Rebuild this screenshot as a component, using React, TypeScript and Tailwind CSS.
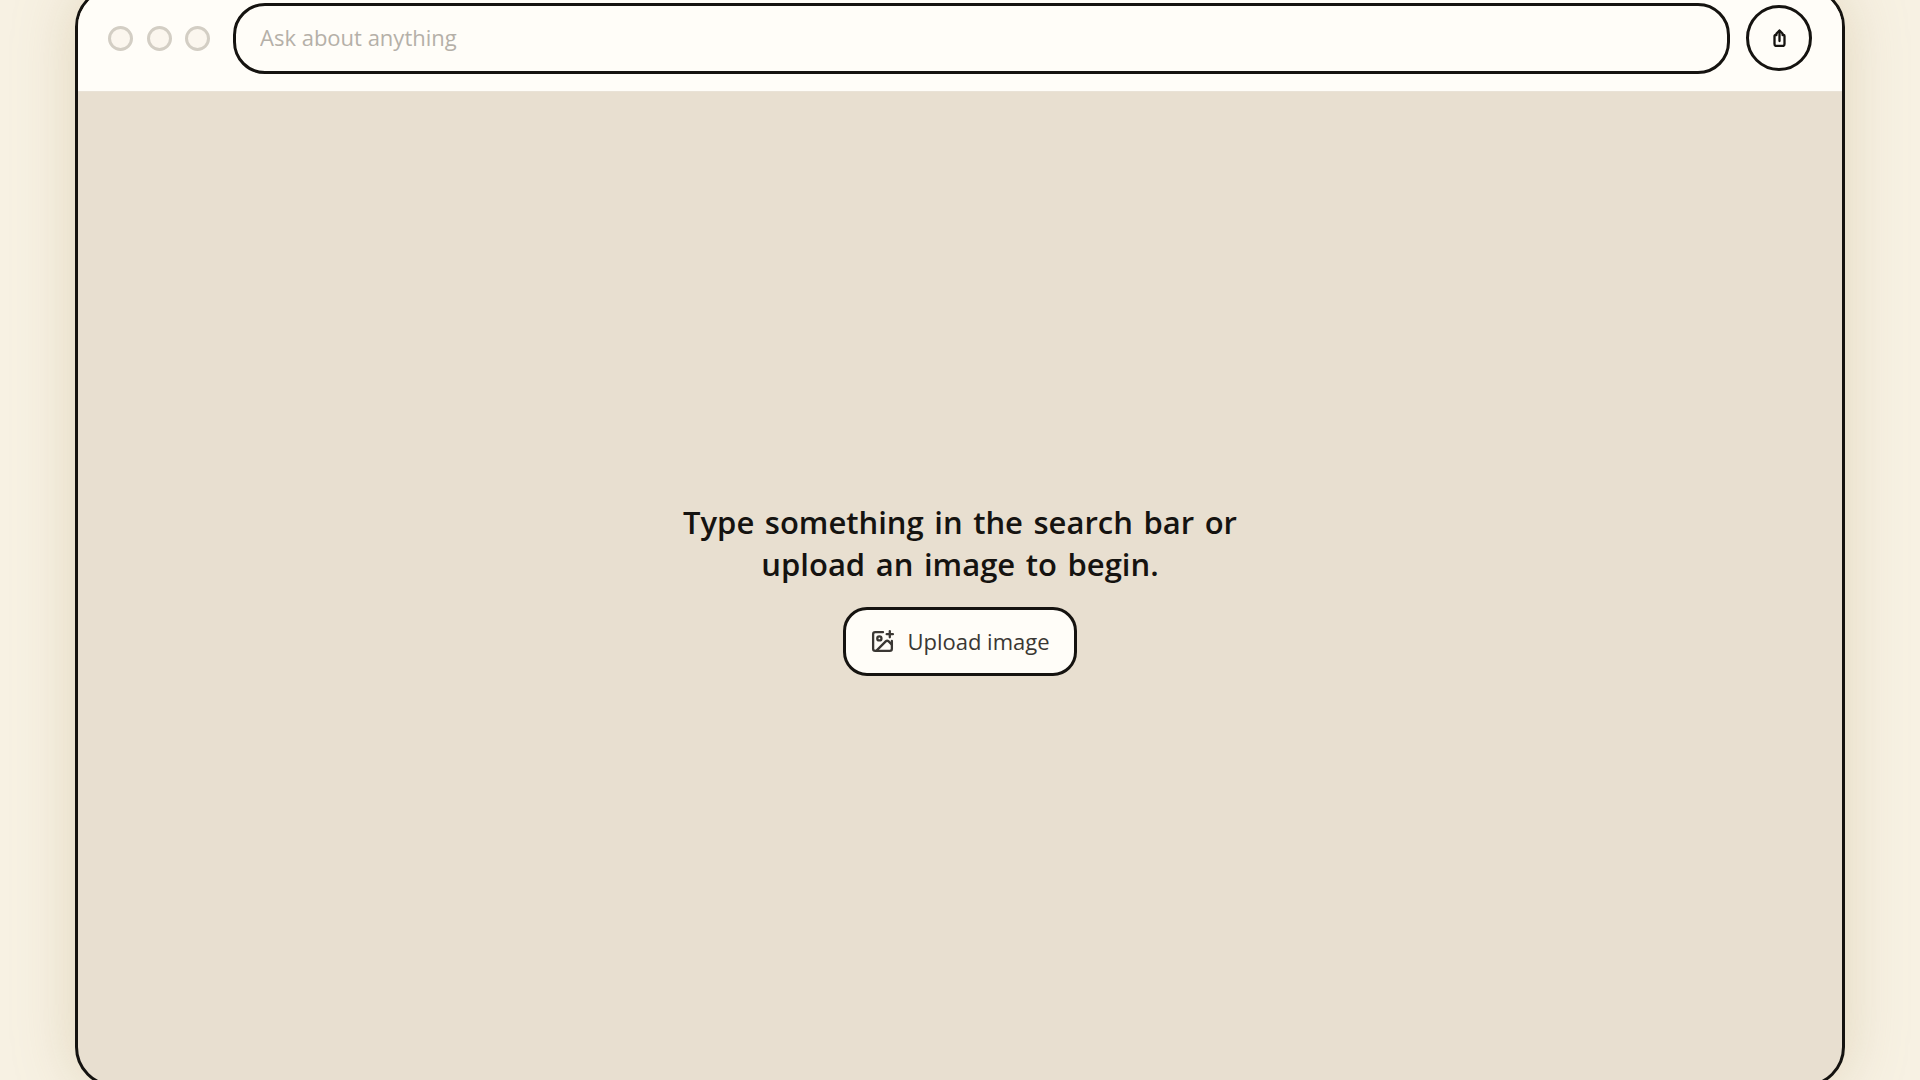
import { ImagePlus } from 'lucide-react';

function ShareIcon() {
  return (
    <svg width="15" height="18" viewBox="0 0 14 18" fill="none" stroke="#151310" strokeWidth="2.3" strokeLinecap="round" strokeLinejoin="round">
      <path d="M4 6H3a1 1 0 0 0-1 1v8a2 2 0 0 0 2 2h6a2 2 0 0 0 2-2V7a1 1 0 0 0-1-1h-1" />
      <path d="M7 12V2" />
      <path d="M4 4.5 7 1.5l3 3" />
    </svg>
  );
}

export default function App() {
  return (
    <div className="h-screen overflow-hidden bg-[#f7f1e3] flex justify-center font-['Open_Sans',sans-serif]">
      <div className="w-[1770px] h-[1100px] -mt-[13px] shrink-0 flex flex-col overflow-hidden rounded-[40px] border-[3px] border-[#151310] bg-[#e8dfd0] shadow-[0_0_60px_rgba(190,170,125,0.38)]">
        <header className="h-[102px] shrink-0 flex items-center gap-[16px] px-[30px] pb-[5px] bg-[#fffdf8] border-b border-[#e9e2d6]">
          <div className="flex items-center gap-[13.5px] pr-[7px]">
            <span className="w-[25px] h-[25px] rounded-full border-[3px] border-[#d3cec4] bg-[#fbf6ee]" />
            <span className="w-[25px] h-[25px] rounded-full border-[3px] border-[#d3cec4] bg-[#fbf6ee]" />
            <span className="w-[25px] h-[25px] rounded-full border-[3px] border-[#d3cec4] bg-[#fbf6ee]" />
          </div>
          <input
            placeholder="Ask about anything"
            className="flex-1 h-[71px] rounded-[32px] border-[3px] border-[#151310] bg-[#fffdf8] px-[24px] pb-[3px] text-[22px] outline-none placeholder:text-[#b5b0a8]"
          />
          <button className="w-[66px] h-[66px] shrink-0 rounded-full border-[3px] border-[#151310] flex items-center justify-center">
            <ShareIcon />
          </button>
        </header>
        <main className="flex-1 flex flex-col items-center justify-center">
          <p className="text-[31px] leading-[42px] font-semibold text-center text-[#151310] [word-spacing:2.5px]">
            Type something in the search bar or
            <br />
            upload an image to begin.
          </p>
          <button className="mt-[22px] h-[69px] flex items-center gap-[12px] px-[24px] rounded-[24px] border-[3px] border-[#151310] bg-[#fffdf8] text-[22px] text-[#3a3733]">
            <ImagePlus className="w-[25px] h-[25px]" strokeWidth={2.2} />
            Upload image
          </button>
        </main>
      </div>
    </div>
  );
}
